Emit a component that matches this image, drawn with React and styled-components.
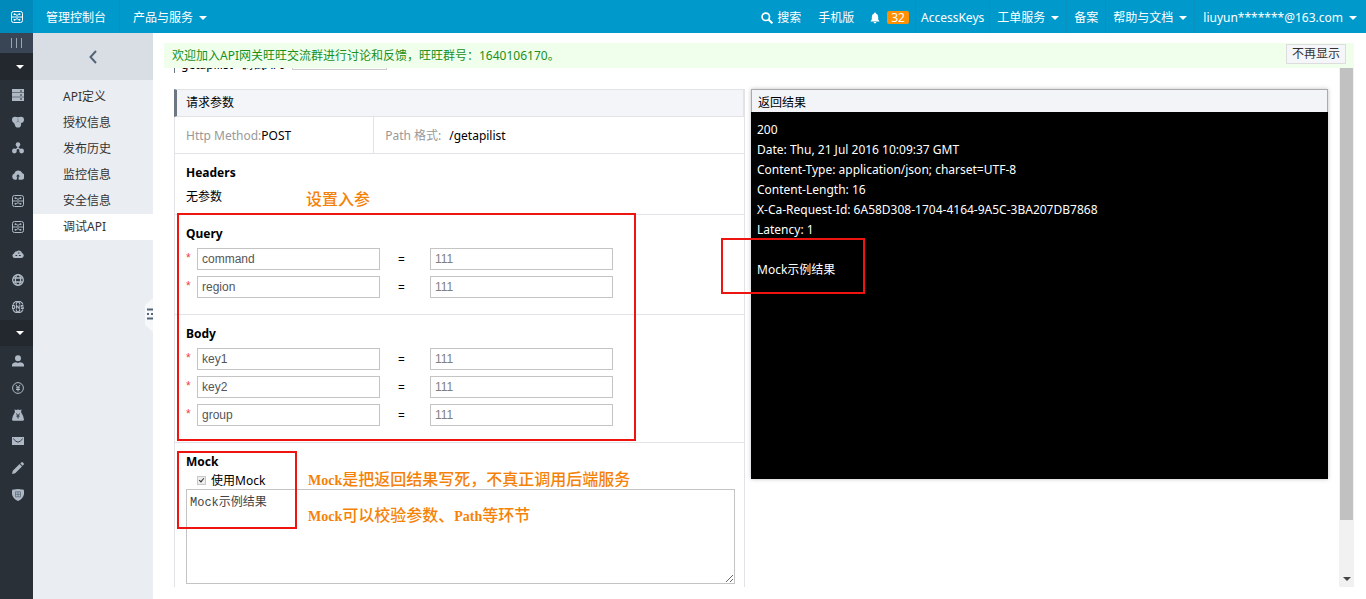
import React from "react";
import styled, { createGlobalStyle, css } from "styled-components";

const Global = createGlobalStyle`
  *, *::before, *::after { box-sizing: border-box; }
  body {
    margin: 0;
    background: #fff;
    color: #000;
    font: 12px/20px "Noto Sans", "Noto Sans CJK SC", sans-serif;
  }
  button, input, textarea { font: inherit; margin: 0; }
  a { color: inherit; text-decoration: none; }
  h1, h2, h3, p, ul { margin: 0; padding: 0; font-size: inherit; }
`;

/* ---------- top bar ---------- */
const Page = styled.div`
  display: flex;
  flex-direction: column;
  height: 100vh;
  min-width: 1200px;
  overflow: hidden;
`;
const TopBar = styled.header`
  display: flex;
  flex: none;
  height: 33px;
  background: #0099cc;
  color: #fff;
`;
const Brand = styled.a`
  display: flex;
  align-items: center;
  justify-content: center;
  width: 33px;
  background: #008abb;
`;
const TopLink = styled.a`
  display: flex;
  align-items: center;
  gap: ${(p) => p.$gap || 6}px;
  padding: 2px ${(p) => p.$pad || 7}px 0;
  white-space: nowrap;
  border-right: 1px solid ${(p) => (p.$line ? "#0a8fbe" : "transparent")};
`;
const Spacer = styled.div`
  flex: 1;
`;
const Caret = styled.span`
  width: 0;
  height: 0;
  border: 4px solid transparent;
  border-top-color: #fff;
  border-bottom: 0;
`;
const Badge = styled.span`
  padding: 0 4px;
  line-height: 13px;
  border-radius: 2px;
  background: #ff9000;
`;

/* ---------- side rails ---------- */
const Body = styled.div`
  display: flex;
  flex: 1;
  min-height: 0;
`;
const Rail = styled.nav`
  flex: none;
  width: 33px;
  background: #293038;
  color: #aeb9c5;
`;
const RailButton = styled.button`
  display: flex;
  align-items: center;
  justify-content: center;
  width: 100%;
  height: ${(p) => p.$h}px;
  padding: 0;
  border: 0;
  background: ${(p) => (p.$fold ? "#394555" : "#22282e")};
  ${(p) => !p.$fold && css`padding-left: 6px;`}
`;
const RailGroup = styled.div`
  display: grid;
  grid-auto-rows: 1fr;
  height: ${(p) => p.$h}px;
  padding-top: 2px;
`;
const RailLink = styled.a`
  display: flex;
  align-items: center;
  justify-content: center;
  padding-left: 2px;
`;
const Side = styled.nav`
  position: relative;
  flex: none;
  width: 120px;
  background: #eaedf1;
  color: #333;
`;
const BackButton = styled.button`
  display: flex;
  align-items: center;
  justify-content: center;
  width: 100%;
  height: 47px;
  padding: 0;
  border: 0;
  background: #d9dee4;
  color: #546478;
`;
const SideList = styled.ul`
  padding-top: 4px;
  list-style: none;
`;
const SideLink = styled.a`
  display: block;
  padding-left: 30px;
  line-height: 26px;
  background: ${(p) => (p.$active ? "#fff" : "transparent")};
`;
const Handle = styled.button`
  position: absolute;
  right: 0;
  top: 265px;
  width: 8px;
  height: 34px;
  padding: 0;
  border: 0;
  background: none;
  line-height: 0;
`;

/* ---------- content ---------- */
const Main = styled.main`
  display: flex;
  flex-direction: column;
  flex: 1;
  min-width: 0;
  padding: 10px 12px 12px 11px;
`;
const Notice = styled.div`
  display: flex;
  justify-content: space-between;
  align-items: flex-start;
  flex: none;
  height: 25px;
  padding: 1px 8px 0;
  background: #f0ffec;
  color: #1b8f1b;
  line-height: 24px;
`;
const DismissButton = styled.button`
  height: 20px;
  padding: 0 5px;
  border: 1px solid #ddd;
  background: #f5f6fa;
  color: #333;
  line-height: 18px;
`;
const Scroller = styled.div`
  display: flex;
  flex: 1;
  min-height: 0;
  gap: 11px;
  overflow: hidden;
`;
const Sheet = styled.div`
  flex: 1;
  display: flex;
  flex-direction: column;
  min-width: 0;
  padding-left: 10px;
`;
const TitleRow = styled.div`
  display: flex;
  align-items: flex-end;
  flex: none;
  gap: 8px;
  height: 5px;
  margin-bottom: 16px;
  overflow: hidden;
  line-height: 16px;
`;
const Title = styled.h1`
  padding-left: 6px;
  border-left: 1px solid #6d7781;
  font-weight: 400;
`;
const ListButton = styled.button`
  height: 18px;
  margin-bottom: 3px;
  padding: 0 13px;
  border: 1px solid #ccc;
  background: #fff;
  line-height: 16px;
`;
const Columns = styled.div`
  display: grid;
  grid-template-columns: 571fr 577fr;
  flex: 1;
  align-items: start;
  gap: 6px;
  min-height: 0;
`;
const Form = styled.form`
  min-width: 0;
  align-self: stretch;
  border: solid #e1e3e6;
  border-width: 0 1px;
`;
const FormHead = styled.h2`
  padding: 3px 9px 3px;
  margin-left: -1px;
  border: 1px solid #e1e3e6;
  border-left: 3px solid #6d7781;
  background: #f4f5f9;
  font-weight: 400;
`;
const Facts = styled.div`
  display: flex;
  border-bottom: 1px solid #e1e3e6;
`;
const Fact = styled.div`
  width: ${(p) => p.$w};
  padding: 9px 11px 7px;
  border-right: ${(p) => (p.$line ? "1px solid #e1e3e6" : "0")};
  color: #999;
`;
const Value = styled.span`
  margin-left: ${(p) => (p.$apart ? "8px" : 0)};
  color: #000;
`;
const Section = styled.section`
  padding: 9px 9px ${(p) => p.$bottom}px 11px;
  border-bottom: 1px solid #e1e3e6;
`;
const SectionTitle = styled.h3`
  font-weight: 700;
`;
const Note = styled.p`
  padding-top: 4px;
`;
const Rows = styled.div`
  display: grid;
  gap: 6px;
  padding-top: 4px;
`;
const Row = styled.div`
  display: flex;
  line-height: 24px;
`;
const Star = styled.span`
  width: 11px;
  color: #f23c3c;
  font-family: "Liberation Sans", sans-serif;
  line-height: 20px;
`;
const Equals = styled.span`
  width: 50px;
  height: 22px;
  padding-left: 18px;
`;
const Field = styled.input`
  width: 183px;
  height: 22px;
  padding: 0 4px 1px;
  border: 1px solid #c4c4c4;
  border-radius: 0;
  background: #fff;
  color: ${(p) => (p.$light ? "#808080" : "#555")};
  font: 12px "Liberation Sans", "Noto Sans CJK SC", sans-serif;
`;
const Params = styled.div`
  position: relative;
`;
const MockArea = styled.section`
  position: relative;
  padding: 9px 9px 0 11px;
`;
const CheckLine = styled.label`
  display: flex;
  align-items: center;
  gap: 5px;
  height: 17px;
  padding-left: 11px;
`;
const Tick = styled.input`
  appearance: none;
  position: relative;
  width: 9px;
  height: 9px;
  border: 1px solid #c8c8c8;
  background: #eee;
  &:checked::after {
    content: "";
    position: absolute;
    left: 2px;
    top: 0;
    width: 3px;
    height: 5px;
    border: solid #333;
    border-width: 0 1px 1px 0;
    transform: rotate(40deg);
  }
`;
const MockText = styled.textarea`
  display: block;
  width: 100%;
  height: 95px;
  padding: 3px;
  border: 1px solid #c4c4c4;
  background: #fff;
  color: #444;
  font: 12px/20px "Liberation Mono", "Noto Sans CJK SC", monospace;
`;

/* ---------- response ---------- */
const Result = styled.section`
  min-width: 0;
  box-shadow: 0 0 4px rgba(0, 0, 0, 0.25);
`;
const ResultHead = styled.h2`
  height: 23px;
  padding: 3px 6px 0;
  border: 1px solid #aaa;
  border-bottom: 0;
  background: #f3f4f8;
  font-weight: 400;
`;
const Output = styled.div`
  position: relative;
  min-height: 367px;
  padding: 8px 6px;
  background: #000;
  color: #fff;
`;
const Line = styled.p`
  min-height: 20px;
`;

/* ---------- mark-up laid over the page ---------- */
const Mark = styled.div`
  position: absolute;
  z-index: 1;
  left: ${(p) => p.$x}px;
  top: ${(p) => p.$y}px;
  width: ${(p) => p.$w}px;
  height: ${(p) => p.$h}px;
  border: 2px solid #ee1410;
  pointer-events: none;
`;
const Remark = styled.p`
  position: absolute;
  z-index: 1;
  left: ${(p) => p.$x}px;
  top: ${(p) => p.$y}px;
  color: #f58208;
  font: 500 16px/20px "Noto Sans CJK SC", sans-serif;
  white-space: nowrap;
  pointer-events: none;
`;
const Latin = styled.span`
  font: 700 14px/20px "Liberation Serif", serif;
`;

/* ---------- scroll bar ---------- */
const Track = styled.div`
  display: flex;
  flex-direction: column;
  justify-content: space-between;
  align-items: center;
  flex: none;
  width: 15px;
  background: #f1f1f1;
`;
const Thumb = styled.div`
  width: 13px;
  height: 87%;
  background: #c1c1c1;
`;
const Down = styled.span`
  width: 0;
  height: 0;
  margin-bottom: 6px;
  border: 4px solid transparent;
  border-top-color: #444;
  border-bottom: 0;
`;

/* ---------- icons ---------- */
const Svg = ({ size = 12, children }) => (
  <svg width={size} height={size} viewBox="0 0 12 12" fill="currentColor" aria-hidden="true">
    {children}
  </svg>
);
const line = { fill: "none", stroke: "currentColor" };
const gateway = (
  <g {...line} strokeWidth="1">
    <rect x="0.5" y="0.5" width="11" height="11" rx="2" />
    <path d="M0.5 6H3.5M8.5 6H11.5M3.5 6H8.5M2.5 3.2H4.2L6 4.4L7.8 3.2H9.5M2.5 8.8H4.2L6 7.6L7.8 8.8H9.5" />
    <path d="M3.6 2.4V4M8.4 2.4V4M3.6 8V9.6M8.4 8V9.6" />
  </g>
);
const icons = {
  server: (
    <>
      <path fillRule="evenodd" d="M0 0h12v3.5H0zM8 1.4v1h2v-1z" />
      <path fillRule="evenodd" d="M0 4.1h12v3.6H0zM8 5.5v1h2v-1z" />
      <path fillRule="evenodd" d="M0 8.3h12v3.6H0zM8 9.6v1h2v-1z" />
    </>
  ),
  heart: (
    <>
      <circle cx="3.1" cy="3.8" r="3.1" />
      <circle cx="8.9" cy="3.8" r="3.1" />
      <circle cx="6" cy="8.4" r="3.1" />
      <path d="M3 1.2h6v4.4L8.8 9H3.2L1 5.6z" />
      <path d="M6 2.4V5L4.4 6.4M6 5L7.6 6.4" fill="none" stroke="#6b7682" strokeWidth="0.7" />
    </>
  ),
  nodes: (
    <>
      <circle cx="6" cy="2.6" r="2.3" />
      <circle cx="2.4" cy="9" r="2.4" />
      <circle cx="9.6" cy="9" r="2.4" />
      <path {...line} strokeWidth="1.4" d="M6 3v3.2M6 6L2.5 8.5M6 6L9.5 8.5" />
    </>
  ),
  cloudUp: (
    <path
      fillRule="evenodd"
      d="M3 10.8A3.2 3.2 0 0 1 2.4 4.6A4.2 4.2 0 0 1 10.4 4.2A3.4 3.4 0 0 1 9.4 10.8H6.6V7.6H8L6 5.2L4 7.6H5.4L4.6 10.8z"
    />
  ),
  gateway,
  cloud: (
    <path
      fillRule="evenodd"
      d="M2.5 10A2.4 2.4 0 0 1 2 5.4A3 3 0 0 1 5 3.2A3.2 3.2 0 0 1 10 5A2.6 2.6 0 0 1 9.6 10zM3.5 7v1h1.7V7zM6 4.6v1h1.5v-1zM7 7v1h1.7V7z"
    />
  ),
  globe: (
    <g {...line} strokeWidth="1.3">
      <circle cx="6" cy="6" r="5.3" />
      <ellipse cx="6" cy="6" rx="2.6" ry="5.3" />
      <path d="M1.2 4h9.6M1.2 8h9.6" />
    </g>
  ),
  dns: (
    <g {...line} strokeWidth="1.1">
      <path d="M1 3.5A5.4 5.4 0 0 1 11 3.5M1 8.5A5.4 5.4 0 0 0 11 8.5M4 3.5Q4.6 1.4 6 0.8Q7.4 1.4 8 3.5M4 8.5Q4.6 10.6 6 11.2Q7.4 10.6 8 8.5" />
      <path d="M0.6 4.4V7.6H1.8Q2.8 7.4 2.8 6T1.8 4.4zM4.5 7.8V4.4L7.2 7.6V4.2M11.4 4.5H9.2V6H11.2V7.5H8.9" />
    </g>
  ),
  user: (
    <>
      <circle cx="6" cy="3.2" r="3" />
      <path d="M0 11.5V9.8Q0.6 7.6 4.2 7.2Q6 8.6 7.8 7.2Q11.4 7.6 12 9.8V11.5z" />
    </>
  ),
  yen: (
    <g {...line} strokeWidth="1">
      <circle cx="6" cy="6" r="5.4" />
      <path d="M3.8 2.8L6 5.6L8.2 2.8M6 5.6V9.4M4 5.8H8M4 7.5H8" />
    </g>
  ),
  bag: (
    <path
      fillRule="evenodd"
      d="M2.4 0.4L4.2 1L6 0.4L7.8 1L9.6 0.4L9 3Q11.6 7 12 10.6Q11.8 11.8 10.6 11.8H1.4Q0.2 11.8 0 10.6Q0.4 7 3 3zM3.8 4.6L5.5 6.8H4.2V7.6H5.5V9.6H6.5V7.6H7.8V6.8H6.5L8.2 4.6H7.2L6 6.2L4.8 4.6z"
    />
  ),
  mail: (
    <>
      <path d="M0 2h12v8H0z" />
      <path d="M1.2 3.6L3.8 6.2L6 7.2L8.2 6.2L10.8 3.6" fill="none" stroke="#293038" strokeWidth="0.9" />
    </>
  ),
  pencil: <path d="M0 12L0.8 8.8L7.6 2L10 4.4L3.2 11.2zM8.3 1.4L9.5 0.2Q10.2-0.2 11 0.6L11.6 1.2Q12.2 2 11.8 2.6L10.6 3.7z" />,
  shield: (
    <>
      <path d="M6 0L11.8 0.8Q12 1 12 5Q11.4 9.6 6 12Q0.6 9.6 0 5Q0 1 0.2 0.8z" />
      <path d="M3.5 2.8h5v5h-5zM3.5 5.3h5M6 2.8v5" fill="none" stroke="#5d6f82" strokeWidth="0.8" />
    </>
  ),
};

const products = ["server", "heart", "nodes", "cloudUp", "gateway", "gateway", "cloud", "globe", "dns"];
const account = ["user", "yen", "bag", "mail", "pencil", "shield"];
const menu = ["API定义", "授权信息", "发布历史", "监控信息", "安全信息", "调试API"];
const response = [
  "200",
  "Date: Thu, 21 Jul 2016 10:09:37 GMT",
  "Content-Type: application/json; charset=UTF-8",
  "Content-Length: 16",
  "X-Ca-Request-Id: 6A58D308-1704-4164-9A5C-3BA207DB7868",
  "Latency: 1",
  "",
  "Mock示例结果",
];

function RailLinks({ names, height }) {
  return (
    <RailGroup $h={height}>
      {names.map((name, i) => (
        <RailLink href="#" key={i} aria-label={name}>
          <Svg>{icons[name]}</Svg>
        </RailLink>
      ))}
    </RailGroup>
  );
}

function ParamSection({ title, names }) {
  return (
    <Section $bottom={16}>
      <SectionTitle>{title}</SectionTitle>
      <Rows>
        {names.map((name) => (
          <Row key={name}>
            <Star>*</Star>
            <Field defaultValue={name} aria-label={`${title} ${name}`} />
            <Equals>=</Equals>
            <Field $light defaultValue="111" aria-label={name} />
          </Row>
        ))}
      </Rows>
    </Section>
  );
}

export default function App() {
  return (
    <Page>
      <Global />
      <TopBar>
        <Brand href="#" aria-label="API">
          <Svg>{gateway}</Svg>
        </Brand>
        <TopLink href="#" $pad={13} $line>管理控制台</TopLink>
        <TopLink href="#" $pad={13}>产品与服务<Caret /></TopLink>
        <Spacer />
        <TopLink href="#" $pad={8} $gap={4}>
          <Svg>
            <circle cx="4.8" cy="4.8" r="3.7" {...line} strokeWidth="1.7" />
            <path d="M7.5 7.5L11.4 11.4" {...line} strokeWidth="2" />
          </Svg>
          搜索
        </TopLink>
        <TopLink href="#" $pad={8}>手机版</TopLink>
        <TopLink href="#" $pad={6} $line>
          <Svg>
            <path d="M6 0.4Q7 0.4 7 1.4Q9.2 2.2 9.2 5V7.6L10.6 9.4H1.4L2.8 7.6V5Q2.8 2.2 5 1.4Q5 0.4 6 0.4zM4.6 10H7.4Q7.2 11.4 6 11.4T4.6 10z" />
          </Svg>
          <Badge>32</Badge>
        </TopLink>
        <TopLink href="#" $pad={5} $line>AccessKeys</TopLink>
        <TopLink href="#" $line>工单服务<Caret /></TopLink>
        <TopLink href="#" $line>备案</TopLink>
        <TopLink href="#" $line>帮助与文档<Caret /></TopLink>
        <TopLink href="#" $pad={8}>liuyun*******@163.com<Caret /></TopLink>
      </TopBar>

      <Body>
        <Rail>
          <RailButton $h={20} $fold aria-label="折叠">
            <svg width="12" height="10" viewBox="0 0 12 10" stroke="#9aa5b1" aria-hidden="true">
              <path d="M0.5 0V10M5.5 0V10M10.5 0V10" />
            </svg>
          </RailButton>
          <RailButton $h={27} aria-label="产品"><Caret /></RailButton>
          <RailLinks names={products} height={240} />
          <RailButton $h={26} aria-label="用户"><Caret /></RailButton>
          <RailLinks names={account} height={162} />
        </Rail>

        <Side>
          <BackButton aria-label="返回">
            <svg width="8" height="14" viewBox="0 0 8 14" fill="none" stroke="currentColor" strokeWidth="2" aria-hidden="true">
              <path d="M7 1L1.5 7L7 13" />
            </svg>
          </BackButton>
          <SideList>
            {menu.map((item, i) => (
              <li key={item}>
                <SideLink href="#" $active={i === menu.length - 1}>{item}</SideLink>
              </li>
            ))}
          </SideList>
          <Handle aria-label="收起">
            <svg width="8" height="34" viewBox="0 0 8 34" aria-hidden="true">
              <path d="M8 0V34L0 27V7z" fill="#f7f8fa" />
              <path d="M2 11.5H8M2 20.5H8M2 16h2M6 16h2" stroke="#546478" strokeWidth="2" />
            </svg>
          </Handle>
        </Side>

        <Main>
          <Notice>
            <span>欢迎加入API网关旺旺交流群进行讨论和反馈，旺旺群号：1640106170。</span>
            <DismissButton>不再显示</DismissButton>
          </Notice>
          <Scroller>
            <Sheet>
              <TitleRow>
                <Title>getapilist</Title>
                <span>调试API</span>
                <ListButton>返回API列表</ListButton>
              </TitleRow>
              <Columns>
                <Form>
                  <FormHead>请求参数</FormHead>
                  <Facts>
                    <Fact $w="35%" $line>Http Method:<Value>POST</Value></Fact>
                    <Fact $w="65%">Path 格式:<Value $apart>/getapilist</Value></Fact>
                  </Facts>
                  <Section $bottom={7}>
                    <SectionTitle>Headers</SectionTitle>
                    <Note>无参数</Note>
                  </Section>
                  <Params>
                    <Remark $x={131} $y={-27}>设置入参</Remark>
                    <ParamSection title="Query" names={["command", "region"]} />
                    <ParamSection title="Body" names={["key1", "key2", "group"]} />
                    <Mark $x={2} $y={-2} $w={459} $h={228} />
                  </Params>
                  <MockArea>
                    <SectionTitle>Mock</SectionTitle>
                    <CheckLine>
                      <Tick type="checkbox" defaultChecked />
                      使用Mock
                    </CheckLine>
                    <MockText aria-label="Mock" defaultValue="Mock示例结果" />
                    <Mark $x={2} $y={8} $w={120} $h={78} />
                    <Remark $x={133} $y={25}><Latin>Mock</Latin>是把返回结果写死，不真正调用后端服务</Remark>
                    <Remark $x={133} $y={61}><Latin>Mock</Latin>可以校验参数、<Latin>Path</Latin>等环节</Remark>
                  </MockArea>
                </Form>
                <Result>
                  <ResultHead>返回结果</ResultHead>
                  <Output>
                    {response.map((text, i) => (
                      <Line key={i}>{text}</Line>
                    ))}
                    <Mark $x={-30} $y={126} $w={144} $h={56} />
                  </Output>
                </Result>
              </Columns>
            </Sheet>
            <Track>
              <Thumb />
              <Down />
            </Track>
          </Scroller>
        </Main>
      </Body>
    </Page>
  );
}
